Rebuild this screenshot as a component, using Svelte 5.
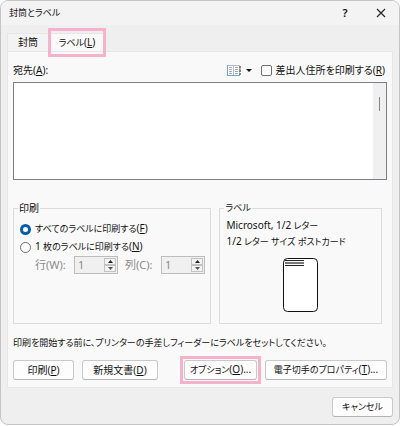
<script>
  let activeTab = $state('labels');
  let address = $state('');
  let returnAddress = $state(false);
  let printMode = $state('all');
  let row = $state(1);
  let column = $state(1);

  let single = $derived(printMode === 'single');
</script>

{#snippet key(letter, tail = '')}<span class="key">(<u>{letter}</u>){tail}</span>{/snippet}

{#snippet spinner(id, value, change)}
  <div class="spinner">
    <input {id} type="text" inputmode="numeric" {value} disabled={!single} />
    <div class="steps">
      <button type="button" aria-label="増やす" disabled={!single} onclick={() => change(1)}>
        <svg viewBox="0 0 5 3"><path d="M0 3L2.5 0L5 3Z" fill="#222" /></svg>
      </button>
      <button type="button" aria-label="減らす" disabled={!single} onclick={() => change(-1)}>
        <svg viewBox="0 0 5 3"><path d="M0 0L2.5 3L5 0Z" fill="#555" /></svg>
      </button>
    </div>
  </div>
{/snippet}

<main class="dialog">
  <header class="titlebar">
    <h1 class="kana">封筒とラベル</h1>
    <button type="button" class="help" aria-label="ヘルプ">?</button>
    <button type="button" class="close" aria-label="閉じる">
      <svg viewBox="0 0 10 10">
        <path d="M1 1L9 9M9 1L1 9" stroke="#222" stroke-width="1.1" fill="none" />
      </svg>
    </button>
  </header>

  <div class="body">
    <div class="tabs" role="tablist">
      <button
        type="button"
        role="tab"
        class="tab"
        class:active={activeTab === 'envelopes'}
        aria-selected={activeTab === 'envelopes'}
        onclick={() => (activeTab = 'envelopes')}
      >
        封筒
      </button>
      <button
        type="button"
        role="tab"
        class="tab kana marked"
        class:active={activeTab === 'labels'}
        aria-selected={activeTab === 'labels'}
        onclick={() => (activeTab = 'labels')}
      >
        ラベル{@render key('L')}
      </button>
    </div>

    <section class="panel">
      <div class="address-bar">
        <label class="address-label" for="address">宛先{@render key('A', ':')}</label>
        <button type="button" class="book" aria-label="アドレス帳">
          <svg class="book-icon" viewBox="0 0 14 11">
            <path d="M0.5 0.5H6.5V10.5H0.5ZM6.5 0.5H12.5V10.5H6.5Z" fill="#fff" stroke="#a9bccb" />
            <path d="M0.5 0V11M0 10.5H13" stroke="#6fa5d2" />
            <path d="M2 2.5H5M2 4.5H5M2 6.5H5M2 8.5H5M8 2.5H11M8 4.5H11M8 6.5H11M8 8.5H11" stroke="#a8a8a8" />
            <path d="M12 1H14V3.5H12Z" fill="#e0694a" />
            <path d="M12 4.5H14V7H12Z" fill="#4b8ac8" />
            <path d="M12 8H14V10H12Z" fill="#7a9a86" />
          </svg>
          <svg class="caret" viewBox="0 0 6 3"><path d="M0 0H6L3 3Z" fill="#111" /></svg>
        </button>
        <label class="choice">
          <input type="checkbox" bind:checked={returnAddress} />
          <span>差出人住所を印刷する{@render key('R')}</span>
        </label>
      </div>

      <div class="address-box">
        <textarea id="address" bind:value={address}></textarea>
        <div class="scrollbar"><div class="thumb"></div></div>
      </div>

      <div class="groups">
        <fieldset>
          <legend>印刷</legend>
          <label class="choice kana">
            <input type="radio" name="mode" value="all" bind:group={printMode} />
            <span>すべてのラベルに印刷する{@render key('F')}</span>
          </label>
          <label class="choice kana">
            <input type="radio" name="mode" value="single" bind:group={printMode} />
            <span><span class="key">1</span> 枚のラベルに印刷する{@render key('N')}</span>
          </label>
          <div class="position" class:dim={!single}>
            <label for="row">行(W):</label>
            {@render spinner('row', row, (n) => (row = Math.max(1, row + n)))}
            <label for="column">列(C):</label>
            {@render spinner('column', column, (n) => (column = Math.max(1, column + n)))}
          </div>
        </fieldset>

        <fieldset class="product">
          <legend class="kana">ラベル</legend>
          <p class="kana"><span class="key">Microsoft, 1/2</span> レター</p>
          <p class="kana"><span class="key">1/2</span> レター サイズ ポストカード</p>
          <svg class="preview" viewBox="0 0 36 55">
            <rect x="0.5" y="0.5" width="34" height="53" rx="4" fill="#fff" stroke="#111" />
            <path d="M2 2.5H21M2 7.5H21" stroke="#222" />
            <path d="M2 5H21" stroke="#777" stroke-width="2" />
          </svg>
        </fieldset>
      </div>

      <p class="hint kana">印刷を開始する前に、プリンターの手差しフィーダーにラベルをセットしてください。</p>

      <div class="actions">
        <button type="button" class="button print">印刷{@render key('P')}</button>
        <button type="button" class="button document">新規文書{@render key('D')}</button>
        <button type="button" class="button options kana marked">オプション{@render key('O', '...')}</button>
        <button type="button" class="button postage kana">電子切手のプロパティ{@render key('T', '...')}</button>
      </div>
    </section>

    <footer>
      <button type="button" class="button cancel kana">キャンセル</button>
    </footer>
  </div>
</main>

<style>
  :global(body) {
    background: #fff;
  }

  .dialog {
    box-sizing: border-box;
    border: 1px solid #c4c4c4;
    border-radius: 8px;
    overflow: hidden;
    background: #efefef;
    color: #111;
    font-family: 'Noto Sans', 'Noto Sans CJK JP', sans-serif;
    font-size: 10px;
    line-height: 16px;
    font-feature-settings: 'palt';
    white-space: nowrap;
  }

  button,
  input,
  textarea {
    box-sizing: border-box;
    margin: 0;
    padding: 0;
    border: 0;
    background: none;
    color: inherit;
    font: inherit;
    font-feature-settings: inherit;
  }

  .kana {
    font-size: 9px;
  }

  .key {
    font-size: 10px;
    line-height: 1;
  }

  u {
    text-underline-offset: 1px;
  }

  p {
    margin: 0;
  }

  svg {
    display: block;
  }

  .titlebar {
    display: flex;
    align-items: center;
    height: 24px;
    padding: 0 13px 0 8px;
    background: #f3f3f3;
  }

  h1 {
    flex: 1;
    margin: 0;
    font-weight: 400;
  }

  .help {
    width: 8px;
    margin-right: 27px;
    font-size: 11px;
    font-weight: 600;
  }

  .close svg {
    width: 10px;
    height: 10px;
  }

  .body {
    padding: 8px 6px 7px;
  }

  .tabs {
    display: flex;
    height: 18px;
  }

  .tab {
    width: 42px;
    border: 1px solid #e6e6e6;
    border-bottom: 0;
    background: #f3f3f3;
    line-height: 17px;
  }

  .tab.active {
    width: 56px;
    background: #f9f9f9;
  }

  .marked {
    position: relative;
  }

  .marked::after {
    content: '';
    position: absolute;
    inset: -5px;
    border: 3px solid #f7b2cb;
    pointer-events: none;
  }

  .tab.marked::after {
    inset: -6px -2px;
  }

  .panel {
    padding: 10px 5px 7px;
    border: 1px solid #e6e6e6;
    background: #f9f9f9;
  }

  .address-bar {
    display: flex;
    align-items: center;
    height: 16px;
    margin-bottom: 4px;
    padding-right: 2px;
  }

  .address-label {
    flex: 1;
  }

  .book {
    display: flex;
    align-items: center;
    gap: 5px;
    margin-right: 9px;
  }

  .book-icon {
    width: 14px;
    height: 11px;
  }

  .caret {
    width: 6px;
    height: 3px;
  }

  .choice {
    display: flex;
    align-items: center;
    gap: 4px;
  }

  .choice input {
    appearance: none;
    flex: none;
    width: 11px;
    height: 11px;
    border: 1px solid #6e6e6e;
    border-radius: 2px;
    background: #fcfcfc;
  }

  .choice input[type='checkbox']:checked {
    background: #0a5cad;
  }

  .choice input[type='radio'] {
    border-radius: 50%;
  }

  .choice input[type='radio']:checked {
    border: 3px solid #0a5cad;
    background: #fff;
  }

  .address-box {
    display: flex;
    height: 98px;
    box-sizing: border-box;
    border: 1px solid #7d7f84;
    background: #fff;
  }

  textarea {
    flex: 1;
    min-width: 0;
    padding: 3px;
    outline: 0;
    resize: none;
  }

  .scrollbar {
    width: 13px;
    padding-top: 14px;
    box-sizing: border-box;
    background: #f0f0f0;
  }

  .thumb {
    width: 1px;
    height: 14px;
    margin: 0 auto;
    background: #868686;
  }

  .groups {
    display: grid;
    grid-template-columns: 199fr 163fr;
    gap: 8px;
    margin: 20px 5px 0 0;
  }

  fieldset {
    min-width: 0;
    height: 124px;
    box-sizing: border-box;
    margin: 0;
    padding: 4px 6px 0;
    border: 1px solid #dcdcdc;
  }

  legend {
    margin-left: -2px;
    padding: 0 1px;
  }

  fieldset .choice {
    height: 18px;
  }

  .position {
    display: grid;
    grid-template-columns: 39px 44px 43px 44px;
    align-items: center;
    margin-left: 15px;
    font-size: 11px;
  }

  .position label:nth-of-type(2) {
    padding-left: 7px;
  }

  .dim {
    color: #8a8a8a;
  }

  .spinner {
    display: flex;
    height: 18px;
    box-sizing: border-box;
    padding: 1px;
    border: 1px solid #bdbdbd;
    background: #f0f0f0;
  }

  .spinner input {
    flex: 1;
    min-width: 0;
    padding-left: 2px;
  }

  .steps {
    display: grid;
    width: 12px;
  }

  .steps button {
    display: grid;
    place-items: center;
    border: 1px solid #c2c2c2;
    background: #f3f3f3;
  }

  .steps svg {
    width: 5px;
    height: 3px;
  }

  .product {
    padding-top: 2px;
  }

  .preview {
    width: 36px;
    height: 55px;
    margin: 8px auto 0;
  }

  .hint {
    margin: 11px 0 9px;
  }

  .actions {
    display: flex;
    gap: 8px;
  }

  .button {
    height: 20px;
    border: 1px solid #c9c9c9;
    border-bottom-color: #b4b4b4;
    border-radius: 3px;
    background: #fdfdfd;
    line-height: 18px;
  }

  .print {
    width: 61px;
  }

  .document {
    width: 76px;
  }

  .options {
    width: 73px;
    margin-left: auto;
  }

  .postage {
    width: 122px;
  }

  footer {
    display: flex;
    justify-content: flex-end;
    margin-top: 9px;
  }

  .cancel {
    width: 61px;
  }
</style>
